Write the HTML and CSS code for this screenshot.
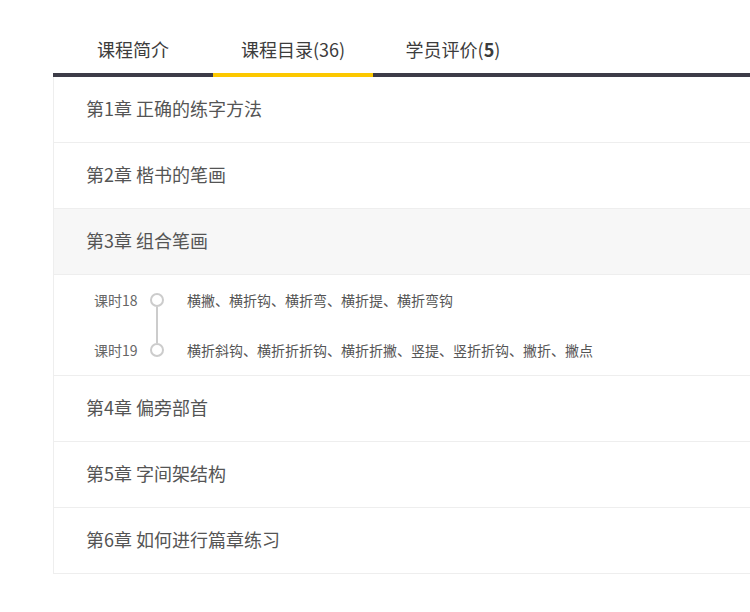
FILE: index.html
```html
<!DOCTYPE html>
<html lang="zh-CN">
<head>
<meta charset="utf-8">
<title>课程目录</title>
<link rel="stylesheet" href="styles.css">
</head>
<body>
<div class="course">
  <div class="tabs">
    <div class="tab">课程简介</div>
    <div class="tab active">课程目录(36)</div>
    <div class="tab">学员评价(<b>5</b>)</div>
  </div>
  <ul class="chapters">
    <li class="chapter">第1章 正确的练字方法</li>
    <li class="chapter">第2章 楷书的笔画</li>
    <li class="chapter open">第3章 组合笔画</li>
    <li class="lessons">
      <div class="lesson">
        <span class="label">课时18</span>
        <span class="dot first"></span>
        <span class="name">横撇、横折钩、横折弯、横折提、横折弯钩</span>
      </div>
      <div class="lesson">
        <span class="label">课时19</span>
        <span class="dot"></span>
        <span class="name">横折斜钩、横折折折钩、横折折撇、竖提、竖折折钩、撇折、撇点</span>
      </div>
    </li>
    <li class="chapter">第4章 偏旁部首</li>
    <li class="chapter">第5章 字间架结构</li>
    <li class="chapter">第6章 如何进行篇章练习</li>
  </ul>
</div>
</body>
</html>
```

FILE: styles.css
```css
html, body {
  margin: 0;
  padding: 0;
  background: #fff;
}
body {
  font-family: "Noto Sans CJK SC", "Microsoft YaHei", sans-serif;
  color: #555;
}
.course {
  padding: 21px 0 0 53px;
}
.tabs {
  display: flex;
  border-bottom: 4px solid #3d3c48;
}
.tab {
  width: 160px;
  height: 52px;
  line-height: 56px;
  text-align: center;
  font-size: 18px;
  color: #3c3c3c;
}
.tab b {
  font-weight: 700;
}
.tab.active {
  margin-bottom: -4px;
  border-bottom: 4px solid #fcc800;
}
.chapters {
  list-style: none;
  margin: 0;
  padding: 0;
  border-left: 1px solid #eeeeee;
}
.chapter {
  height: 65px;
  line-height: 63px;
  padding-left: 32px;
  font-size: 18px;
  color: #555;
  border-bottom: 1px solid #eeeeee;
}
.chapter.open {
  background: #f7f7f7;
}
.lessons {
  border-bottom: 1px solid #eeeeee;
}
.lesson {
  display: flex;
  align-items: center;
  height: 50px;
  padding-left: 40px;
  font-size: 14px;
}
.label {
  width: 56px;
  color: #666;
}
.dot {
  position: relative;
  width: 10px;
  height: 10px;
  border: 2px solid #cccccc;
  border-radius: 50%;
  margin-right: 23px;
}
.dot.first::after {
  content: "";
  position: absolute;
  left: 4px;
  top: 12px;
  width: 2px;
  height: 36px;
  background: #cccccc;
}
.name {
  color: #555;
}
```
